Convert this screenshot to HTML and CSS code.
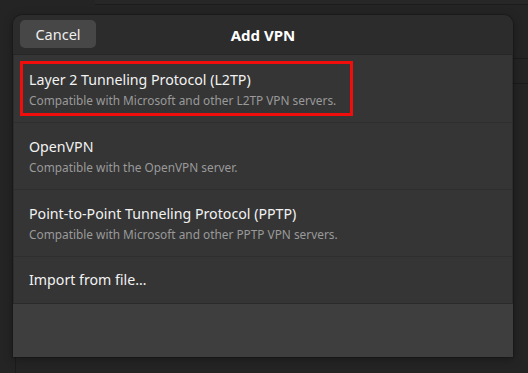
FILE: index.html
```html
<!DOCTYPE html>
<html>
<head>
<meta charset="utf-8">
<link rel="stylesheet" href="styles.css">
</head>
<body>
<div class="desktop">
  <div class="bgwin-top"></div>
  <div class="bgwin-right"><div class="bgline"></div><div class="bgline"></div></div>
  <div class="bgwin-left"></div>
  <div class="dialog">
    <div class="header">
      <button class="cancel">Cancel</button>
      <div class="title">Add VPN</div>
    </div>
    <div class="list">
      <div class="row first">
        <div class="row-title">Layer 2 Tunneling Protocol (L2TP)</div>
        <div class="row-sub">Compatible with Microsoft and other L2TP VPN servers.</div>
        <div class="highlight"></div>
      </div>
      <div class="row">
        <div class="row-title">OpenVPN</div>
        <div class="row-sub">Compatible with the OpenVPN server.</div>
      </div>
      <div class="row">
        <div class="row-title">Point-to-Point Tunneling Protocol (PPTP)</div>
        <div class="row-sub">Compatible with Microsoft and other PPTP VPN servers.</div>
      </div>
      <div class="row single">
        <div class="row-title">Import from file…</div>
      </div>
    </div>
    <div class="footer"></div>
  </div>
</div>
</body>
</html>
```
FILE: styles.css
```css
html, body {
  margin: 0;
  padding: 0;
  background: #242424;
  width: 528px;
  height: 373px;
  overflow: hidden;
  font-family: "Noto Sans", "DejaVu Sans", sans-serif;
}
.desktop {
  position: relative;
  width: 528px;
  height: 373px;
}
.bgwin-top {
  position: absolute;
  left: 95px;
  top: 0;
  right: 0;
  height: 4px;
  background: #272727;
  border-bottom: 1px solid #1c1c1c;
}
.bgwin-right {
  position: absolute;
  left: 513px;
  right: 0;
  top: 58px;
  display: flex;
  flex-direction: column;
  gap: 24px;
}
.bgline {
  height: 1px;
  background: #1b1b1b;
}
.bgwin-left {
  position: absolute;
  left: 15px;
  top: 355px;
  bottom: 0;
  width: 1px;
  background: #1b1b1b;
}
.dialog {
  position: absolute;
  left: 13px;
  top: 15px;
  width: 500px;
  display: flex;
  flex-direction: column;
  border-radius: 9px 9px 0 0;
  background: #2c2c2c;
  box-shadow: 0 2px 10px rgba(0,0,0,0.35), 0 0 0 1px rgba(0,0,0,0.15);
}
.header {
  height: 39px;
  position: relative;
  display: flex;
  align-items: center;
  justify-content: center;
  border-bottom: 1px solid #262626;
}
.cancel {
  position: absolute;
  left: 7px;
  top: 5px;
  width: 76px;
  height: 28px;
  border: none;
  border-radius: 5px;
  background: #474747;
  color: #eeeeee;
  font-family: inherit;
  font-size: 14.5px;
  padding: 0;
}
.title {
  color: #ffffff;
  font-weight: bold;
  font-size: 15px;
}
.list {
  background: #353535;
  margin: 0 1px;
  display: flex;
  flex-direction: column;
}
.row {
  position: relative;
  height: 67px;
  box-sizing: border-box;
  padding: 15px 0 0 15px;
  border-bottom: 1px solid #2e2e2e;
}
.row.first {
  height: 68px;
  padding-top: 16px;
}
.row.single {
  height: 46px;
  padding-top: 14px;
  border-bottom: none;
}
.row-title {
  color: #f2f2f2;
  font-size: 14.2px;
  line-height: 18px;
}
.row-sub {
  color: #9a9a9a;
  font-size: 11.85px;
  line-height: 16px;
  margin-top: 3px;
}
.highlight {
  position: absolute;
  left: 6px;
  top: 6px;
  width: 333px;
  height: 55px;
  box-sizing: border-box;
  border: 3px solid #f20d0d;
}
.footer {
  height: 53px;
  background: #3e3e3e;
  border-top: 1px solid #2a2a2a;
}
```
